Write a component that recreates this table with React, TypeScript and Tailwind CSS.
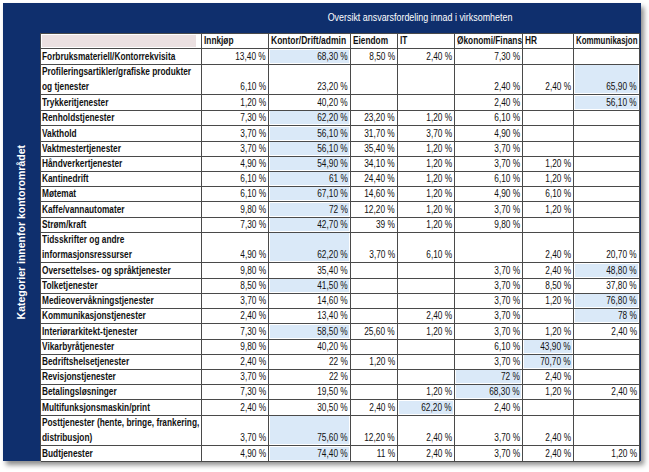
const font = { fontFamily: '"Liberation Sans", Arial, sans-serif' };

interface Row {
  label: string[];
  values: string[];
  hl: number[];
}

const rows: Row[] = [
  { label: ["Forbruksmateriell/Kontorrekvisita"], values: ["13,40 %", "68,30 %", "8,50 %", "2,40 %", "7,30 %", "", ""], hl: [1] },
  { label: ["Profileringsartikler/grafiske produkter", "og tjenester"], values: ["6,10 %", "23,20 %", "", "", "2,40 %", "2,40 %", "65,90 %"], hl: [6] },
  { label: ["Trykkeritjenester"], values: ["1,20 %", "40,20 %", "", "", "2,40 %", "", "56,10 %"], hl: [6] },
  { label: ["Renholdstjenester"], values: ["7,30 %", "62,20 %", "23,20 %", "1,20 %", "6,10 %", "", ""], hl: [1] },
  { label: ["Vakthold"], values: ["3,70 %", "56,10 %", "31,70 %", "3,70 %", "4,90 %", "", ""], hl: [1] },
  { label: ["Vaktmestertjenester"], values: ["3,70 %", "56,10 %", "35,40 %", "1,20 %", "3,70 %", "", ""], hl: [1] },
  { label: ["Håndverkertjenester"], values: ["4,90 %", "54,90 %", "34,10 %", "1,20 %", "3,70 %", "1,20 %", ""], hl: [1] },
  { label: ["Kantinedrift"], values: ["6,10 %", "61 %", "24,40 %", "1,20 %", "6,10 %", "1,20 %", ""], hl: [1] },
  { label: ["Møtemat"], values: ["6,10 %", "67,10 %", "14,60 %", "1,20 %", "4,90 %", "6,10 %", ""], hl: [1] },
  { label: ["Kaffe/vannautomater"], values: ["9,80 %", "72 %", "12,20 %", "1,20 %", "3,70 %", "1,20 %", ""], hl: [1] },
  { label: ["Strøm/kraft"], values: ["7,30 %", "42,70 %", "39 %", "1,20 %", "9,80 %", "", ""], hl: [1] },
  { label: ["Tidsskrifter og andre", "informasjonsressurser"], values: ["4,90 %", "62,20 %", "3,70 %", "6,10 %", "", "2,40 %", "20,70 %"], hl: [1] },
  { label: ["Oversettelses- og språktjenester"], values: ["9,80 %", "35,40 %", "", "", "3,70 %", "2,40 %", "48,80 %"], hl: [6] },
  { label: ["Tolketjenester"], values: ["8,50 %", "41,50 %", "", "", "3,70 %", "8,50 %", "37,80 %"], hl: [1] },
  { label: ["Medieovervåkningstjenester"], values: ["3,70 %", "14,60 %", "", "", "3,70 %", "1,20 %", "76,80 %"], hl: [6] },
  { label: ["Kommunikasjonstjenester"], values: ["2,40 %", "13,40 %", "", "2,40 %", "3,70 %", "", "78 %"], hl: [6] },
  { label: ["Interiørarkitekt-tjenester"], values: ["7,30 %", "58,50 %", "25,60 %", "1,20 %", "3,70 %", "1,20 %", "2,40 %"], hl: [1] },
  { label: ["Vikarbyråtjenester"], values: ["9,80 %", "40,20 %", "", "", "6,10 %", "43,90 %", ""], hl: [5] },
  { label: ["Bedriftshelsetjenester"], values: ["2,40 %", "22 %", "1,20 %", "", "3,70 %", "70,70 %", ""], hl: [5] },
  { label: ["Revisjonstjenester"], values: ["3,70 %", "22 %", "", "", "72 %", "2,40 %", ""], hl: [4] },
  { label: ["Betalingsløsninger"], values: ["7,30 %", "19,50 %", "", "1,20 %", "68,30 %", "1,20 %", "2,40 %"], hl: [4] },
  { label: ["Multifunksjonsmaskin/print"], values: ["2,40 %", "30,50 %", "2,40 %", "62,20 %", "2,40 %", "", ""], hl: [3] },
  { label: ["Posttjenester (hente, bringe, frankering,", "distribusjon)"], values: ["3,70 %", "75,60 %", "12,20 %", "2,40 %", "3,70 %", "2,40 %", ""], hl: [1] },
  { label: ["Budtjenester"], values: ["4,90 %", "74,40 %", "11 %", "2,40 %", "3,70 %", "2,40 %", "1,20 %"], hl: [1] },
];

const headers = [
  { name: "Innkjøp", scale: "scale-x-[0.83]" },
  { name: "Kontor/Drift/admin", scale: "scale-x-[0.85]" },
  { name: "Eiendom", scale: "scale-x-[0.83]" },
  { name: "IT", scale: "scale-x-[0.83]" },
  { name: "Økonomi/Finans", scale: "scale-x-[0.83]" },
  { name: "HR", scale: "scale-x-[0.83]" },
  { name: "Kommunikasjon", scale: "scale-x-[0.79]" },
];

const cols = "grid grid-cols-[161px_67px_82px_47px_57px_68px_51px_66px]";
const cell = "border-r border-b border-[#4a4a4a]";
// Arial is wider than the Calibri in the sheet, so narrow it
const narrow = "inline-block whitespace-nowrap";

export default function App() {
  return (
    <div className="w-[649px] h-[472px] bg-white pt-[3px] pl-[3px]" style={font}>
      <div className="flex w-[638px] h-[458px] bg-[#0f2f6d] shadow-[3px_4px_5px_rgba(0,0,0,0.45)]">
        <div className="w-[37px] flex items-center justify-center">
          <span className="[writing-mode:vertical-rl] rotate-180 text-white font-bold text-[10.5px] leading-none">
            Kategorier innenfor kontorområdet
          </span>
        </div>
        <div className="flex flex-col">
          <div className="h-[30px] pl-[161px] flex items-center justify-center text-white text-[11px] pb-[1px]">
            <span className={`${narrow} scale-x-[0.81] origin-center`}>
              Oversikt ansvarsfordeling innad i virksomheten
            </span>
          </div>
          <div className="bg-white border-l border-t border-[#4a4a4a] text-[10px] text-[#111]">
            <div className={`${cols} h-[15px]`}>
              <div className={`${cell} py-[1px] pl-[1px] pr-[5px]`}>
                <div className="h-full bg-[#ebe0e1]" />
              </div>
              {headers.map((h) => (
                <div key={h.name} className={`${cell} pl-[2px] font-bold leading-[14px]`}>
                  <span className={`${narrow} ${h.scale} origin-left`}>{h.name}</span>
                </div>
              ))}
            </div>
            {rows.map((r, i) => {
              const tall = r.label.length > 1;
              return (
                <div key={i} className={`${cols} ${tall ? "h-[31px]" : "h-[15.2px]"}`}>
                  <div className={`${cell} pl-[1px] font-bold leading-[15px] flex flex-col justify-end items-start`}>
                    {r.label.map((l) => (
                      <span key={l} className={`${narrow} scale-x-[0.83] origin-left`}>
                        {l}
                      </span>
                    ))}
                  </div>
                  {r.values.map((v, j) => (
                    <div key={j} className={`${cell} p-[1px]`}>
                      <div
                        className={`h-full flex items-end justify-end pr-[1px] leading-[13px] ${
                          r.hl.includes(j) && v ? "bg-[#dae9f8]" : ""
                        }`}
                      >
                        <span className={`${narrow} scale-x-[0.83] origin-right`}>{v}</span>
                      </div>
                    </div>
                  ))}
                </div>
              );
            })}
          </div>
        </div>
      </div>
    </div>
  );
}
